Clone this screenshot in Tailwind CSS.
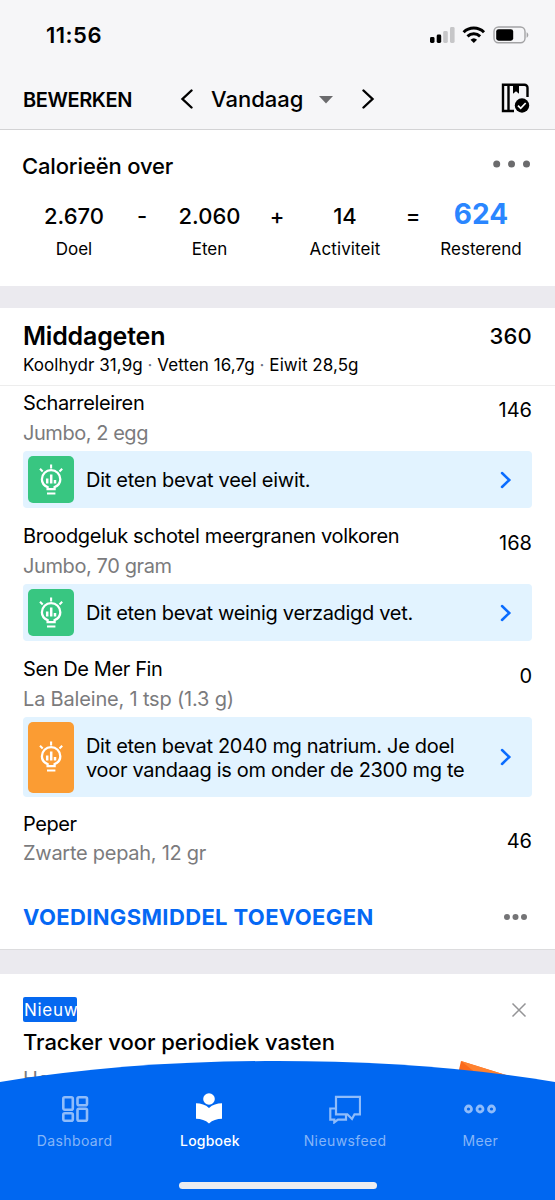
<!DOCTYPE html>
<html lang="nl">
<head>
<meta charset="utf-8">
<meta name="viewport" content="width=device-width">
<title>Logboek</title>
<script src="https://cdn.jsdelivr.net/npm/@tailwindcss/browser@4"></script>
</head>
<body class="bg-white">
<svg class="hidden">
  <symbol id="bulb" viewBox="0 0 24 32">
    <g fill="none" stroke="currentColor" stroke-width="2.300">
      <path d="M8.600 25.200v-2.100C5 21.700 2.900 18.700 2.900 15.300a9.200 9.200 0 0 1 18.400 0c0 3.400-2.100 6.400-5.700 7.800v2.100z" />
      <path d="M8 29.500h8.400M12.100 .6v3.800M1 4.800l2.700 2.600M23.200 4.800l-2.700 2.600" stroke-width="2.100"/>
      <path d="M8.200 14.500v5M12.200 10.500v9M16 16v3.500" stroke-width="2.500"/>
    </g>
  </symbol>
  <symbol id="chev" viewBox="0 0 12 18"><path d="M2 2l7.300 7L2 16" fill="none" stroke="currentColor" stroke-width="2.500" stroke-linecap="round"/></symbol>
</svg>
<div class="relative w-[555px] h-[1200px] overflow-hidden bg-white text-black font-['Inter',sans-serif] whitespace-nowrap">

  <header class="h-[130px] bg-[#f6f6f8] border-b border-[#d3d3d5]">
    <div class="h-[70px] pl-[46px] pr-[26px] flex items-center justify-between">
      <span class="text-[22px] font-semibold tracking-[0.5px] leading-[28px]">11:56</span>
      <svg width="101" height="20" viewBox="0 0 101 20" class="mb-px">
        <rect x="2" y="12" width="4.500" height="6" rx="1.400"/><rect x="8.700" y="9.500" width="4.500" height="8.500" rx="1.400"/>
        <rect x="15.200" y="6" width="4.600" height="12" rx="1.400" fill="#c6c6c8"/><rect x="22" y="2" width="4.600" height="16" rx="1.400" fill="#c6c6c8"/>
        <g fill="none" stroke="#000" stroke-width="3"><path d="M35.600 7.300a14.500 14.500 0 0 1 20.400 0"/><path d="M39.500 11.400a9 9 0 0 1 12.600 0"/></g>
        <path d="M45.800 18l-3.300-3.300a4.800 4.800 0 0 1 6.600 0z"/>
        <rect x="66" y="2" width="31" height="15.800" rx="4.500" fill="none" stroke="#a3a3a5" stroke-width="1.400"/>
        <rect x="68.200" y="4.200" width="17" height="11.500" rx="2.400"/><path d="M98.600 7.200c2.300 1 2.300 4.500 0 5.500z" fill="#a3a3a5"/>
      </svg>
    </div>
    <div class="h-[59px] pl-[23px] pr-[24px] flex items-center">
      <span class="w-[157px] text-[20px] font-semibold tracking-[-0.4px]">BEWERKEN</span>
      <svg width="14" height="22" viewBox="0 0 14 22" class="mb-1" fill="none" stroke="#000" stroke-width="2.400" stroke-linecap="round"><path d="M11.500 3.500L2.500 12 11.500 20.500"/></svg>
      <span class="ml-[17px] w-[108px] text-[22px] font-medium">Vandaag</span>
      <svg width="14" height="8" viewBox="0 0 14 8" class="mt-px"><path d="M0 0h14L7 7.500z" fill="#6b6b6d"/></svg>
      <svg width="14" height="22" viewBox="0 0 14 22" class="ml-[28px] mb-1" fill="none" stroke="#000" stroke-width="2.400" stroke-linecap="round"><path d="M2.500 3.500l9 8.500-9 8.500"/></svg>
      <svg width="29" height="30" viewBox="0 0 29 30" class="ml-auto mb-[3px] mr-px">
        <path d="M13 28H2V1.800h21.500a3 3 0 0 1 3 3V14M7.500 2v26" fill="none" stroke="#000" stroke-width="2.400"/>
        <path d="M12 1.500h6v9.200l-3-2.400-3 2.400z"/><circle cx="21" cy="22.500" r="7.200"/>
        <path d="M17 22.600l2.700 2.700 5-5.300" fill="none" stroke="#fff" stroke-width="1.800"/>
      </svg>
    </div>
  </header>

  <section class="h-[156px] pt-[20px]">
    <div class="pl-[22px] pr-[24px] h-[32px] flex items-center justify-between">
      <h2 class="text-[22px] font-medium tracking-[-0.15px]">Calorieën over</h2>
      <svg width="39" height="8" viewBox="0 0 39 8" class="mb-1" fill="#6b6b6d"><circle cx="4.700" cy="4" r="3.500"/><circle cx="19.500" cy="4" r="3.500"/><circle cx="34.500" cy="4" r="3.500"/></svg>
    </div>
    <div class="mt-[16px] px-[14px] grid grid-cols-[120px_16px_119px_16px_120px_16px_120px] text-center text-[22px] font-medium leading-[37px] h-[36px]">
      <span>2.670</span><span>-</span><span>2.060</span><span>+</span><span>14</span><span>=</span><span class="text-[28px] font-bold text-[#2a86ff] leading-[32px]">624</span>
    </div>
    <div class="mt-px px-[14px] grid grid-cols-[120px_16px_119px_16px_120px_16px_120px] text-center text-[17px] leading-[29px]">
      <span class="col-span-2 pr-4">Doel</span><span class="col-span-2 pr-4">Eten</span><span class="col-span-2 pr-4 tracking-[0.1px]">Activiteit</span><span>Resterend</span>
    </div>
  </section>

  <div class="h-[22px] bg-[#ebeaef]"></div>

  <section class="h-[642px]">
    <div class="h-[78px] px-[23px] pt-[12px] border-b border-[#ededed]">
      <div class="flex justify-between h-[32px] leading-[32px]">
        <h2 class="text-[25px] font-semibold tracking-[-0.2px]">Middageten</h2><span class="text-[22px] font-medium tracking-[0.2px]">360</span>
      </div>
      <p class="text-[17px] leading-[26px] tracking-[0.05px]">Koolhydr 31,9g <span class="text-gray-500">·</span> Vetten 16,7g <span class="text-gray-500">·</span> Eiwit 28,5g</p>
    </div>

    <article class="h-[132px] px-[23px] pt-[3px]">
      <div class="flex justify-between text-[20px]">
        <div><h3 class="leading-[28px] tracking-[-0.36px]">Scharreleiren</h3><p class="leading-[30px] mt-px tracking-[-0.45px] text-[#7b7b7d]">Jumbo, 2 egg</p></div>
        <span class="leading-[42px]">146</span>
      </div>
      <div class="mt-[3px] h-[57px] rounded-[4px] bg-[#e2f3ff] pl-[5px] pr-[20px] flex items-center">
        <div class="w-[46px] h-[47px] rounded-[5px] bg-[#38c681] text-white flex items-center justify-center"><svg width="24" height="32"><use href="#bulb"/></svg></div>
        <p class="ml-[12px] text-[20px] tracking-[-0.27px] grow">Dit eten bevat veel eiwit.</p>
        <svg width="12" height="18" class="text-[#0a6cff]"><use href="#chev"/></svg>
      </div>
    </article>

    <article class="h-[133px] px-[23px] pt-[4px]">
      <div class="flex justify-between text-[20px]">
        <div><h3 class="leading-[28px] tracking-[-0.33px]">Broodgeluk schotel meergranen volkoren</h3><p class="leading-[30px] mt-px tracking-[-0.4px] text-[#7b7b7d]">Jumbo, 70 gram</p></div>
        <span class="leading-[42px]">168</span>
      </div>
      <div class="mt-[3px] h-[57px] rounded-[4px] bg-[#e2f3ff] pl-[5px] pr-[20px] flex items-center">
        <div class="w-[46px] h-[47px] rounded-[5px] bg-[#38c681] text-white flex items-center justify-center"><svg width="24" height="32"><use href="#bulb"/></svg></div>
        <p class="ml-[12px] text-[20px] tracking-[-0.31px] grow">Dit eten bevat weinig verzadigd vet.</p>
        <svg width="12" height="18" class="text-[#0a6cff]"><use href="#chev"/></svg>
      </div>
    </article>

    <article class="h-[156px] px-[23px] pt-[4px]">
      <div class="flex justify-between text-[20px]">
        <div><h3 class="leading-[28px] tracking-[-0.4px]">Sen De Mer Fin</h3><p class="leading-[30px] mt-px tracking-[-0.18px] text-[#7b7b7d]">La Baleine, 1 tsp (1.3 g)</p></div>
        <span class="leading-[42px]">0</span>
      </div>
      <div class="mt-[3px] h-[80px] rounded-[4px] bg-[#e2f3ff] pl-[5px] pr-[20px] flex items-center">
        <div class="w-[46px] h-[71px] rounded-[5px] bg-[#fb9c33] text-white flex items-center justify-center"><svg width="24" height="32"><use href="#bulb"/></svg></div>
        <p class="ml-[12px] pt-[2px] text-[20px] leading-[24px] tracking-[-0.31px] grow">Dit eten bevat 2040 mg natrium. Je doel<br>voor vandaag is om onder de 2300 mg te</p>
        <svg width="12" height="18" class="text-[#0a6cff]"><use href="#chev"/></svg>
      </div>
    </article>

    <article class="h-[68px] px-[23px] pt-[3px] flex justify-between text-[20px]">
      <div><h3 class="leading-[28px] tracking-[-0.45px]">Peper</h3><p class="leading-[30px] tracking-[-0.27px] text-[#7b7b7d]">Zwarte pepah, 12 gr</p></div>
      <span class="leading-[62px]">46</span>
    </article>

    <div class="h-[75px] pt-[10px] pl-[23px] pr-[27px] flex items-center justify-between border-b border-[#dcdcde]">
      <span class="text-[22px] font-bold tracking-[0.36px] text-[#0568f4]">VOEDINGSMIDDEL TOEVOEGEN</span>
      <svg width="25" height="8" viewBox="0 0 25 8" fill="#747476"><circle cx="4" cy="4" r="3"/><circle cx="12.500" cy="4" r="3"/><circle cx="21" cy="4" r="3"/></svg>
    </div>
  </section>

  <div class="h-[24px] bg-[#ebeaef]"></div>

  <section class="px-[23px] pt-[23px]">
    <div class="flex justify-between items-center pr-[5px]">
      <span class="w-[54px] h-[25px] pl-px rounded-[2px] bg-[#0568f0] text-white text-[17px] leading-[26px] tracking-[0.7px]">Nieuw</span>
      <svg width="16" height="16" viewBox="0 0 16 16" stroke="#949496" stroke-width="1.500"><path d="M1.500 1.500l13 13M14.500 1.500l-13 13"/></svg>
    </div>
    <h2 class="mt-[5px] text-[22px] leading-[30px] font-medium tracking-[-0.06px]">Tracker voor periodiek vasten</h2>
    <div class="flex justify-between pr-[16px]">
      <p class="mt-[7px] text-[20px] leading-[30px] text-[#7b7b7d]">Hou</p>
      <svg width="60" height="40" viewBox="0 0 60 40" class="mt-[3px]"><path d="M5 1l55 17v22H-4z" fill="#fb6a1c"/><path d="M5 1l55 17H26z" fill="#ff822f"/></svg>
    </div>
  </section>

  <nav class="absolute inset-x-0 bottom-0 h-[140px]">
    <svg class="absolute inset-0" width="555" height="140" viewBox="0 0 555 140"><path d="M0 22C90 7 185 1 277 1s188 6 278 21v118H0z" fill="#0067f1"/></svg>
    <div class="relative pt-[33px] px-[7px] grid grid-cols-4 text-[14px] leading-[20px] tracking-[0.4px] text-[#85b5f8] text-center">
      <div class="flex flex-col items-center gap-[7px]">
        <svg width="28" height="31" viewBox="0 0 28 31" fill="none" stroke="#8fbcfa" stroke-width="2.600"><rect x="2.300" y="4.300" width="9.500" height="12.500" rx="1.500"/><rect x="16.500" y="4.300" width="9.500" height="8" rx="1.500"/><rect x="2.300" y="20.300" width="9.500" height="7.500" rx="1.500"/><rect x="16.500" y="15.800" width="9.500" height="12" rx="1.500"/></svg>
        <span>Dashboard</span>
      </div>
      <div class="flex flex-col items-center gap-[7px] text-white">
        <svg width="28" height="31" viewBox="0 0 28 31" fill="#fff" class="mr-[2px]"><circle cx="14" cy="6" r="5.800"/><path d="M1 10.300c5 0 9.500 1.500 13 4.700 3.500-3.200 8-4.700 13-4.700v15.500c-5 0-9.500 1.500-13 4.700-3.500-3.200-8-4.700-13-4.700z"/></svg>
        <span class="font-medium tracking-[0.2px]">Logboek</span>
      </div>
      <div class="flex flex-col items-center gap-[7px]">
        <svg width="32" height="31" viewBox="0 0 32 31" fill="none" stroke="#8fbcfa" stroke-width="2.200"><path d="M7 3.800h24v17.500h-5.500L23 26l-4.700-4.700H7z"/><path d="M7 15.500H1.300v11.200h4v2.700l3.600-2.700H17v-5"/></svg>
        <span>Nieuwsfeed</span>
      </div>
      <div class="flex flex-col items-center gap-[7px]">
        <svg width="32" height="31" viewBox="0 0 32 31" fill="none" stroke="#8fbcfa" stroke-width="2.800"><circle cx="4.500" cy="16" r="3"/><circle cx="16" cy="16" r="3"/><circle cx="27.500" cy="16" r="3"/></svg>
        <span>Meer</span>
      </div>
    </div>
    <div class="absolute left-[179px] bottom-[11px] w-[198px] h-[7px] rounded-full bg-[#ededf0]"></div>
  </nav>
</div>
</body>
</html>
